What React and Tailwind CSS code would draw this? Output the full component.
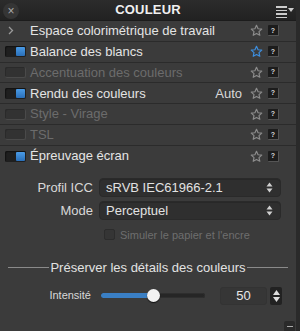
import { useState } from "react";

const ROWS = [
  { label: "Espace colorimétrique de travail", kind: "chevron" },
  { label: "Balance des blancs", kind: "on", starred: true },
  { label: "Accentuation des couleurs", kind: "off" },
  { label: "Rendu des couleurs", kind: "on", extra: "Auto" },
  { label: "Style - Virage", kind: "off" },
  { label: "TSL", kind: "off" },
  { label: "Épreuvage écran", kind: "on", last: true },
];

function Star({ active }) {
  return (
    <svg width="13" height="13" viewBox="0 0 24 24" fill="none" stroke={active ? "#3d8fe0" : "#8c8c8c"} strokeWidth="2.2" strokeLinejoin="round">
      <path d="M12 2.5l2.9 6.3 6.8.7-5.1 4.6 1.5 6.7L12 17.4l-6.1 3.4 1.5-6.7-5.1-4.6 6.8-.7z" />
    </svg>
  );
}

function Help() {
  return (
    <span className="grid h-[11px] w-[11px] place-items-center rounded-[1px] border-b border-r border-[#555] bg-[#1c1c1c] text-[7px] font-bold leading-none text-[#d8d8d8]">
      ?
    </span>
  );
}

function Toggle({ on }) {
  if (!on) {
    return <div className="h-[11px] w-[21px] rounded-[2px] border-b border-r border-[#4a4a4a] bg-[#323232] shadow-[inset_1px_1px_0_#2a2a2a]" />;
  }
  return (
    <div className="relative h-[11px] w-[21px] rounded-[2px] bg-[#1f1f1f] shadow-[inset_1px_1px_1px_#121212]">
      <div className="absolute right-[1px] top-[1px] h-[9px] w-[9px] rounded-[1px] bg-gradient-to-b from-[#4a9be6] to-[#2a6fb8]" />
    </div>
  );
}

function Arrows() {
  return (
    <svg width="7" height="11" viewBox="0 0 7 11" fill="#d0d0d0">
      <path d="M3.5 0.5L6.5 4.5H0.5z" />
      <path d="M3.5 10.5L6.5 6.5H0.5z" />
    </svg>
  );
}

function Select({ value }) {
  return (
    <div className="flex h-[19px] w-[182px] items-center justify-between rounded-[4px] border border-[#2a2a2a] bg-[#2f2f2f] pl-[6px] pr-[7px] text-[13px] text-[#e2e2e2] shadow-[inset_0_1px_0_#282828]">
      <span>{value}</span>
      <Arrows />
    </div>
  );
}

export default function App() {
  const [value] = useState(50);

  return (
    <div className="h-[331px] w-[300px] overflow-hidden bg-[#2a2a2a] font-['Liberation_Sans',Arial,sans-serif]">
      <div className="flex h-[331px] w-[296px] flex-col bg-[#393939]">
        <div className="relative flex h-[21px] items-center justify-center border-b border-[#1c1c1c] bg-gradient-to-b from-[#2c2c2c] to-[#222]">
          <span className="absolute left-[3px] top-[3px] grid h-[16px] w-[16px] place-items-center rounded-full bg-[#353535] text-[12px] leading-none text-[#aaa]">
            ×
          </span>
          <span className="text-[13px] font-bold tracking-[0.2px] text-[#f0f0f0]">COULEUR</span>
          <span className="absolute right-[2px] top-[5px] flex items-start gap-[1px]">
            <span className="flex flex-col gap-[2px] pt-[1px]">
              <span className="h-[1.5px] w-[11px] bg-[#ccc]" />
              <span className="h-[1.5px] w-[11px] bg-[#ccc]" />
              <span className="h-[1.5px] w-[11px] bg-[#ccc]" />
              <span className="h-[1.5px] w-[11px] bg-[#ccc]" />
            </span>
            <svg width="6" height="5" viewBox="0 0 6 5" className="mt-[3px]" fill="#ccc">
              <path d="M0 0h6L3 4z" />
            </svg>
          </span>
        </div>

        {ROWS.map((r) => (
          <div
            key={r.label}
            className={`flex h-[20.8px] items-center pl-[5px] pr-[17px] ${r.last ? "" : "border-b border-[#2b2b2b]"} bg-[#3b3b3b]`}
          >
            <div className="flex w-[25px] shrink-0 items-center">
              {r.kind === "chevron" ? (
                <svg width="6" height="9" viewBox="0 0 6 9" fill="none" stroke="#9a9a9a" strokeWidth="1.3" className="ml-[3px]">
                  <path d="M1 1l3.5 3.5L1 8" />
                </svg>
              ) : (
                <Toggle on={r.kind === "on"} />
              )}
            </div>
            <span className={`flex-1 text-[13px] ${r.kind === "off" ? "text-[#6c6c6c]" : "text-[#e4e4e4]"}`}>
              {r.label}
            </span>
            {r.extra && <span className="mr-[8px] text-[13px] text-[#d8d8d8]">{r.extra}</span>}
            <span className="flex items-center gap-[5px]">
              <Star active={r.starred} />
              <Help />
            </span>
          </div>
        ))}

        <div className="flex flex-1 flex-col bg-[#3b3b3b]">
          <div className="mt-[11px] flex items-center">
            <span className="w-[99px] pr-[6px] text-right text-[13px] text-[#d8d8d8]">Profil ICC</span>
            <Select value="sRVB IEC61966-2.1" />
          </div>
          <div className="mt-[4px] flex items-center">
            <span className="w-[99px] pr-[6px] text-right text-[13px] text-[#d8d8d8]">Mode</span>
            <Select value="Perceptuel" />
          </div>
          <div className="mt-[6px] flex items-center pl-[104px]">
            <span className="h-[11px] w-[11px] rounded-[2px] border border-[#2c2c2c] bg-[#353535]" />
            <span className="ml-[5px] text-[11px] text-[#6e6e6e]">Simuler le papier et l'encre</span>
          </div>

          <div className="mt-[15px] flex items-center px-[8px]">
            <span className="h-px w-[41px] bg-[#8a8a8a]" />
            <span className="flex-1 text-center text-[13px] text-[#e2e2e2]">Préserver les détails des couleurs</span>
            <span className="h-px w-[41px] bg-[#8a8a8a]" />
          </div>

          <div className="mt-[9px] flex items-center">
            <span className="w-[92px] pr-[1px] text-right text-[11px] text-[#d8d8d8]">Intensité</span>
            <div className="relative ml-[9px] h-[5px] w-[104px] rounded-full bg-[#262626] shadow-[inset_0_0_0_1px_#2e2e2e]">
              <div className="h-[5px] w-[52px] rounded-full bg-[#3a7fc4]" />
              <span className="absolute left-[46px] top-[-4px] h-[13px] w-[13px] rounded-full bg-[#f2f2f2] shadow-[0_1px_1px_#111]" />
            </div>
            <div className="ml-[15px] flex h-[18px] w-[47px] items-center justify-center rounded-[3px] border border-[#333] bg-[#363636] text-[13px] text-[#e8e8e8]">
              {value}
            </div>
            <div className="ml-[3px] flex h-[18px] w-[12px] flex-col items-center justify-center gap-[2px] rounded-[2px] bg-[#222]">
              <svg width="7" height="5" viewBox="0 0 7 5" fill="#ddd"><path d="M3.5 0L7 5H0z" /></svg>
              <svg width="7" height="5" viewBox="0 0 7 5" fill="#ddd"><path d="M3.5 5L7 0H0z" /></svg>
            </div>
          </div>

          <div className="mt-auto flex justify-end pr-[1px]">
            <span className="flex h-[10px] w-[11px] items-center justify-center rounded-t-[2px] bg-[#2a2a2a]">
              <span className="h-px w-[6px] bg-[#aaa]" />
            </span>
          </div>
        </div>
      </div>
    </div>
  );
}
